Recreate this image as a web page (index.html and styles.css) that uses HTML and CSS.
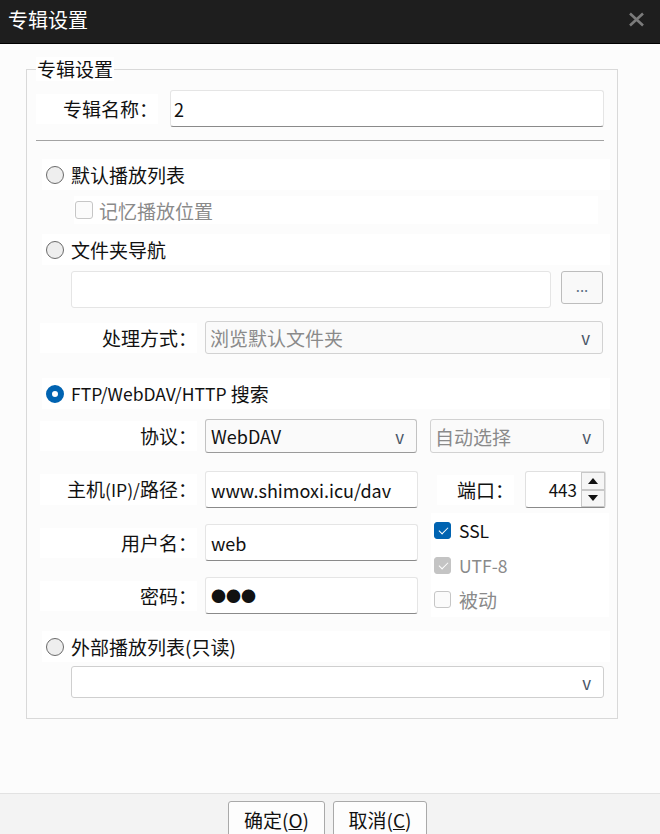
FILE: index.html
```html
<!DOCTYPE html>
<html lang="zh-CN">
<head>
    <meta charset="UTF-8">
    <title>专辑设置</title>
    <link rel="stylesheet" href="styles.css">
</head>
<body>
    <div class="titlebar">
        <span class="title">专辑设置</span>
        <svg class="close" width="17" height="15" viewBox="0 0 17 15">
            <path d="M2 1.5 L15 13.5 M15 1.5 L2 13.5" stroke="#7b7b7b" stroke-width="2.6" fill="none"/>
        </svg>
    </div>

    <div class="content">
        <fieldset class="group">
            <legend>专辑设置</legend>

            <!-- album name -->
            <div class="row name-row">
                <span class="lbl name-lbl">专辑名称：</span>
                <div class="field name-field">2</div>
            </div>
            <div class="sep"></div>

            <!-- default playlist -->
            <div class="opt first-opt"><span class="radio"></span>默认播放列表</div>
            <div class="chk-row sub-chk muted"><span class="chk"></span>记忆播放位置</div>

            <!-- folder navigation -->
            <div class="opt"><span class="radio"></span>文件夹导航</div>
            <div class="row folder-row">
                <div class="field folder-field"></div>
                <div class="dots-btn">...</div>
            </div>
            <div class="row mode-row">
                <span class="lbl">处理方式：</span>
                <div class="dropdown off mode-drop">浏览默认文件夹<span class="caret">v</span></div>
            </div>

            <!-- ftp / webdav / http -->
            <div class="opt ftp-opt"><span class="radio on"></span><span class="lat">FTP/WebDAV/HTTP</span>&nbsp;搜索</div>
            <div class="row proto-row">
                <span class="lbl">协议：</span>
                <div class="dropdown proto-drop"><span class="val">WebDAV</span><span class="caret">v</span></div>
                <div class="dropdown off enc-drop">自动选择<span class="caret">v</span></div>
            </div>
            <div class="row host-row">
                <span class="lbl">主机<span class="lat">(IP)/</span>路径：</span>
                <div class="field mid-field val">www.shimoxi.icu/dav</div>
                <span class="lbl port-lbl">端口：</span>
                <div class="spin">
                    <span class="spin-val">443</span>
                    <div class="spin-btns">
                        <span class="spin-btn"><span class="tri-up"></span></span>
                        <span class="spin-btn"><span class="tri-down"></span></span>
                    </div>
                </div>
            </div>
            <div class="login">
                <div class="login-fields">
                    <div class="row login-row">
                        <span class="lbl">用户名：</span>
                        <div class="field mid-field val">web</div>
                    </div>
                    <div class="row login-row pass-row">
                        <span class="lbl">密码：</span>
                        <div class="field mid-field pass">●●●</div>
                    </div>
                </div>
                <div class="login-flags">
                    <div class="chk-row flag"><span class="chk on"></span><span class="lat">SSL</span></div>
                    <div class="chk-row flag mid-flag muted"><span class="chk on off"></span><span class="lat">UTF-8</span></div>
                    <div class="chk-row flag muted"><span class="chk"></span>被动</div>
                </div>
            </div>

            <!-- external playlist -->
            <div class="opt ext-opt"><span class="radio"></span>外部播放列表(只读)</div>
            <div class="dropdown ext-drop"><span></span><span class="caret">v</span></div>
        </fieldset>
    </div>

    <div class="footer">
        <button class="btn ok-btn">确定(<u>O</u>)</button>
        <button class="btn">取消(<u>C</u>)</button>
    </div>
</body>
</html>
```

FILE: styles.css
```css
* {
    box-sizing: border-box;
}
html, body {
    margin: 0;
}
body {
    width: 660px;
    height: 834px;
    overflow: hidden;
    display: flex;
    flex-direction: column;
    background: #fcfcfc;
    font-family: "Noto Sans CJK SC", "Noto Sans", sans-serif;
    font-size: 19px;
    color: #111;
}
.lat {
    font-size: 17.5px;
}
.val {
    font-size: 18px;
}
.titlebar {
    height: 44px;
    flex-shrink: 0;
    display: flex;
    align-items: center;
    justify-content: space-between;
    padding: 0 15px 4px 8px;
    background: #1e1e1e;
    border-bottom: 1px solid #000;
    color: #fff;
    font-size: 20px;
}
.content {
    flex: 1;
    padding: 13px 0 0 26px;
}
.group {
    width: 592px;
    min-width: 0;
    margin: 0;
    padding: 9px 7px 20px 9px;
    border: 1px solid #d9d9d9;
}
.group legend {
    padding: 0 1px;
    font-size: 19px;
    line-height: 24px;
    background: #fff;
}
.row {
    display: flex;
    align-items: center;
}
.lbl {
    width: 157px;
    flex-shrink: 0;
    margin: 0 8px 0 4px;
    line-height: 30px;
    text-align: right;
    background: #fff;
}
.name-row {
    height: 37px;
}
.name-lbl {
    width: 122px;
    margin: 0 12px 0 0;
}
.field {
    height: 37px;
    display: flex;
    align-items: center;
    padding: 0 5px;
    background: #fff;
    border: 1px solid #e5e5e5;
    border-bottom-color: #8a8a8a;
    border-radius: 3px;
}
.name-field {
    width: 434px;
    padding-left: 3px;
    font-size: 18px;
}
.sep {
    height: 1px;
    margin: 13px 6px 0 0;
    background: #a3a3a3;
}
.opt {
    height: 31px;
    display: flex;
    align-items: center;
    margin-left: 6px;
    padding-left: 4px;
    background: #fff;
}
.first-opt {
    margin-top: 18px;
}
.radio {
    width: 18px;
    height: 18px;
    flex-shrink: 0;
    margin-right: 7px;
    border-radius: 50%;
    border: 1px solid #6a6a6a;
    background: #eeeeee;
}
.radio.on {
    border: 6px solid #0063b1;
    background: #fff;
}
.chk-row {
    display: flex;
    align-items: center;
    padding-left: 1px;
    background: #fff;
}
.muted {
    color: #8a8a8a;
}
.sub-chk {
    height: 28px;
    margin: 6px 12px 0 38px;
}
.sub-chk + .opt {
    margin-top: 10px;
}
.chk {
    position: relative;
    width: 18px;
    height: 18px;
    flex-shrink: 0;
    margin-right: 6px;
    border: 1px solid #c6c6c6;
    border-radius: 3px;
    background: #fbfbfb;
}
.chk.on {
    border-color: #0063b1;
    background: #0063b1;
}
.chk.on.off {
    border-color: #c4c4c4;
    background: #c4c4c4;
}
.chk.on::after {
    content: "";
    position: absolute;
    left: 4px;
    top: 4px;
    width: 8px;
    height: 4px;
    border-left: 1.3px solid #fff;
    border-bottom: 1.3px solid #fff;
    transform: rotate(-45deg);
}
.folder-row {
    margin-top: 6px;
    align-items: flex-start;
}
.folder-field {
    width: 480px;
    margin-left: 35px;
    border-bottom-color: #e5e5e5;
}
.dots-btn {
    width: 42px;
    height: 33px;
    margin-left: 10px;
    padding-top: 3px;
    text-align: center;
    font-size: 15px;
    color: #5d6f86;
    background: #f9f9f9;
    border: 1px solid #bdbdbd;
    border-radius: 3px;
}
.mode-row {
    margin-top: 13px;
}
.dropdown {
    height: 33px;
    display: flex;
    align-items: center;
    justify-content: space-between;
    padding: 0 12px 0 4px;
    background: #fafafa;
    border: 1px solid #c2c2c2;
    border-radius: 3px;
}
.dropdown.off {
    color: #8a8a8a;
    border-color: #d2d2d2;
}
.caret {
    font-size: 17px;
    color: #4a5566;
}
.mode-drop {
    width: 398px;
}
.ftp-opt {
    margin-top: 24px;
}
.proto-row {
    margin-top: 10px;
}
.proto-drop {
    width: 212px;
    height: 34px;
    padding-left: 5px;
    border-bottom-color: #9a9a9a;
}
.enc-drop {
    width: 174px;
    height: 34px;
    margin-left: 13px;
}
.host-row {
    margin-top: 18px;
}
.mid-field {
    width: 213px;
}
.port-lbl {
    width: 77px;
    margin: 0 11px 0 19px;
}
.spin {
    width: 81px;
    height: 37px;
    display: flex;
    background: #fff;
    border: 1px solid #e0e0e0;
    border-bottom-color: #8a8a8a;
    border-radius: 3px;
}
.spin-val {
    flex: 1;
    padding-right: 4px;
    line-height: 35px;
    text-align: right;
    font-size: 17px;
}
.spin-btns {
    width: 24px;
    display: flex;
    flex-direction: column;
}
.spin-btn {
    flex: 1;
    display: flex;
    align-items: center;
    justify-content: center;
    background: #f6f6f6;
    border: 1px solid #c8c8c8;
}
.tri-up, .tri-down {
    width: 0;
    height: 0;
    border-left: 5px solid transparent;
    border-right: 5px solid transparent;
}
.tri-up {
    border-bottom: 6px solid #111;
}
.tri-down {
    border-top: 6px solid #111;
}
.login {
    display: flex;
    margin-top: 5px;
}
.login-fields {
    padding-top: 11px;
}
.login-row {
    height: 37px;
}
.pass-row {
    margin-top: 16px;
}
.pass {
    font-size: 15px;
}
.login-flags {
    width: 178px;
    margin-left: 13px;
}
.flag {
    height: 35px;
    padding-left: 3px;
}
.flag .chk {
    width: 17px;
    height: 17px;
    margin-right: 8px;
}
.mid-flag {
    height: 34px;
}
.ext-opt {
    margin-top: 14px;
}
.ext-drop {
    height: 32px;
    margin: 4px 6px 0 35px;
    background: #fff;
    border-color: #cfcfcf;
}
.footer {
    height: 41px;
    flex-shrink: 0;
    display: flex;
    justify-content: center;
    gap: 8px;
    padding: 7px 5px 0 0;
    background: #f3f3f3;
    border-top: 1px solid #e2e2e2;
}
.btn {
    width: 94px;
    height: 36px;
    flex-shrink: 0;
    padding: 0;
    font: inherit;
    color: #111;
    background: #fdfdfd;
    border: 1px solid #a9a9a9;
    border-radius: 3px;
}
.ok-btn {
    width: 97px;
}
```
